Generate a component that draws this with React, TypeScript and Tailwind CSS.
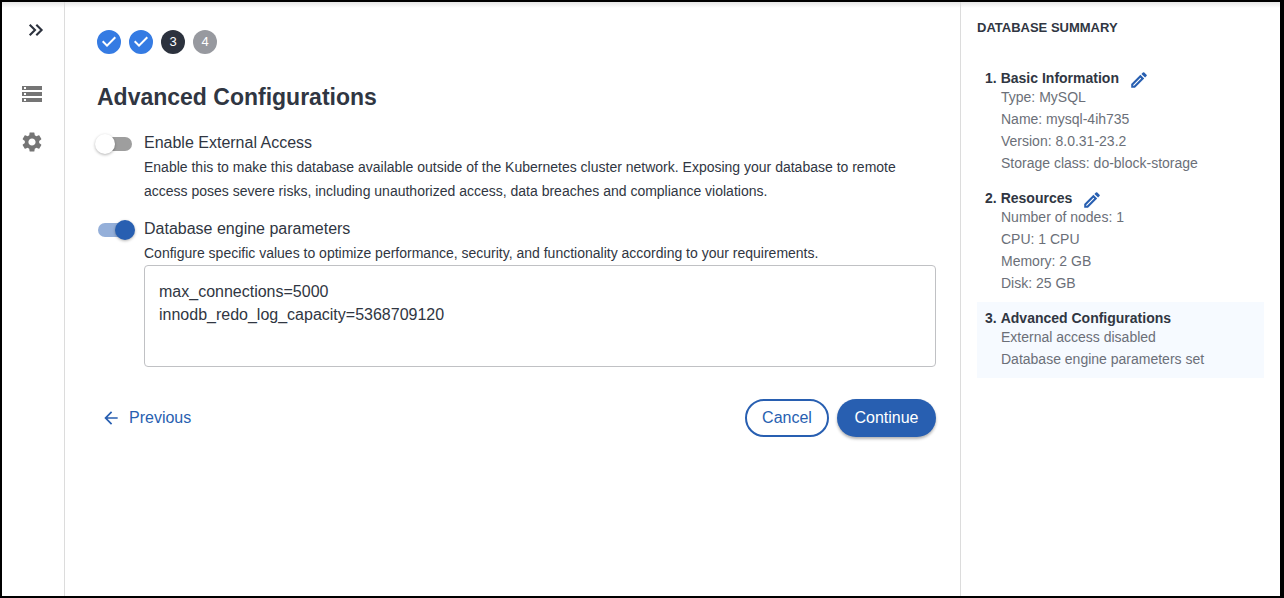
import { useState } from "react";
import type { ReactNode } from "react";
import { MdArrowBack, MdSettings, MdStorage } from "react-icons/md";

function DoneStep({ label }: { label: string }) {
  return (
    <li aria-label={label}>
      <svg viewBox="0 0 24 24" className="block size-6 text-[#357be3]" fill="currentColor">
        <circle cx="12" cy="12" r="10" fill="#fff" />
        <path d="M12 0a12 12 0 1 0 0 24 12 12 0 0 0 0-24zm-2 17l-5-5 1.4-1.4 3.6 3.6 7.6-7.6L19 8l-9 9z" />
      </svg>
    </li>
  );
}

function DoubleChevron() {
  return (
    <svg viewBox="0 0 24 24" className="block size-6" fill="none" stroke="currentColor" strokeWidth="2.1">
      <path d="M5.7 6.7 11 12l-5.3 5.3M12.3 6.7 17.6 12l-5.3 5.3" />
    </svg>
  );
}

function Pencil() {
  return (
    <svg viewBox="0 0 16 16" className="block size-4" fill="currentColor">
      <path
        fillRule="evenodd"
        d="M0.2 12 9.4 2.8l3.8 3.8L4 15.8H0.2zM2.2 13v0.8h0.8l7.2-7.2-0.8-0.8z"
      />
      <path d="M10.4 1.9 11.9 0.5a1 1 0 0 1 1.4 0l2.2 2.2a1 1 0 0 1 0 1.4l-1.4 1.5z" />
    </svg>
  );
}

function Setting({
  id,
  title,
  description,
  checked,
  onChange,
  children,
}: {
  id: string;
  title: string;
  description: string;
  checked: boolean;
  onChange: (value: boolean) => void;
  children?: ReactNode;
}) {
  return (
    <div className="flex items-start gap-[11px]">
      <div className="flex h-6 w-9 shrink-0 items-center justify-center pt-0.5">
        <input
          id={id}
          type="checkbox"
          role="switch"
          checked={checked}
          onChange={(e) => onChange(e.target.checked)}
          className="relative h-3.5 w-[34px] cursor-pointer appearance-none rounded-full bg-[#9e9e9e] before:absolute before:-top-[3px] before:-left-[3px] before:size-5 before:rounded-full before:bg-white before:shadow-[0_1px_3px_rgba(0,0,0,0.3)] checked:bg-[#94afd9] checked:before:left-[17px] checked:before:bg-[#285fb1]"
        />
      </div>
      <div className="min-w-0 flex-1">
        <label htmlFor={id} className="block text-base leading-6">
          {title}
        </label>
        <p className="pr-8 text-sm leading-6">{description}</p>
        {children}
      </div>
    </div>
  );
}

function SummaryItem({
  title,
  number,
  lines,
  editable = false,
  active = false,
}: {
  title: string;
  number: number;
  lines: string[];
  editable?: boolean;
  active?: boolean;
}) {
  return (
    <li className={active ? "bg-[#f6faff] p-2" : "p-2"}>
      <div className="flex h-4 items-center">
        <h3 className="flex gap-1 text-sm leading-4 font-bold">
          <span>{number}.</span>
          <span>{title}</span>
        </h3>
        {editable && (
          <button type="button" aria-label={`Edit ${title}`} className="ml-3 pt-1 text-[#285fb1]">
            <Pencil />
          </button>
        )}
      </div>
      <div className="pl-4 text-sm leading-[22px] text-[#6b6f78]">
        {lines.map((line) => (
          <p key={line}>{line}</p>
        ))}
      </div>
    </li>
  );
}

export default function App() {
  const [external, setExternal] = useState(false);
  const [engine, setEngine] = useState(true);
  const [params, setParams] = useState("max_connections=5000\ninnodb_redo_log_capacity=5368709120");

  return (
    <div className="flex min-h-screen border-2 border-r-4 border-black bg-white font-['Liberation_Sans',Arial,sans-serif] text-[#303642]">
      <div className="flex min-w-0 flex-1 bg-linear-to-b from-[#e6e6e6] to-white to-[6px]">
        <nav aria-label="Main" className="flex w-[63px] shrink-0 flex-col items-start border-r border-[#dcdcdc] pt-4 pl-5 text-[#757575]">
          <button type="button" aria-label="Expand menu" className="mb-10 ml-0.5 text-[#2c323e]">
            <DoubleChevron />
          </button>
          <a href="#databases" aria-label="Databases" className="mb-6 -ml-0.5">
            <MdStorage className="size-6" />
          </a>
          <a href="#settings" aria-label="Settings" className="-ml-0.5">
            <MdSettings className="size-6" />
          </a>
        </nav>

        <main className="min-w-0 flex-1 pt-7 pr-6 pb-8 pl-8">
          <ol className="flex gap-2">
            <DoneStep label="Step 1, done" />
            <DoneStep label="Step 2, done" />
            <li aria-current="step" className="flex size-6 items-center justify-center rounded-full bg-[#2c323e] text-[13px] leading-6 text-white">
              3
            </li>
            <li className="flex size-6 items-center justify-center rounded-full bg-[#97999f] text-[13px] leading-6 text-white">
              4
            </li>
          </ol>

          <h1 className="mt-[27px] text-[23px] leading-8 font-bold">Advanced Configurations</h1>

          <form className="mt-[18px]" onSubmit={(e) => e.preventDefault()}>
            <div className="flex flex-col gap-3.5">
              <Setting
                id="external-access"
                title="Enable External Access"
                description="Enable this to make this database available outside of the Kubernetes cluster network. Exposing your database to remote access poses severe risks, including unauthorized access, data breaches and compliance violations."
                checked={external}
                onChange={setExternal}
              />
              <Setting
                id="engine-parameters"
                title="Database engine parameters"
                description="Configure specific values to optimize performance, security, and functionality according to your requirements."
                checked={engine}
                onChange={setEngine}
              >
                <textarea
                  aria-label="Database engine parameters"
                  rows={3}
                  spellCheck={false}
                  value={params}
                  onChange={(e) => setParams(e.target.value)}
                  className="block w-full resize-none rounded border border-[#c0c1c4] bg-white px-3.5 pt-3.5 pb-[17px] text-base leading-[23px] outline-none"
                />
              </Setting>
            </div>

            <div className="mt-8 flex items-center gap-2 text-base text-[#285fb1]">
              <button type="button" className="mr-auto flex items-center gap-2 py-1.5 pl-1">
                <MdArrowBack className="size-5" />
                Previous
              </button>
              <button type="button" className="min-w-21 rounded-full border-2 border-[#285fb1] px-3 py-1.5 leading-[22px]">
                Cancel
              </button>
              <button type="submit" className="min-w-[99px] rounded-full bg-[#285fb1] px-3 py-2 leading-[22px] text-white shadow-[0_2px_3px_rgba(0,0,0,0.3)]">
                Continue
              </button>
            </div>
          </form>
        </main>

        <aside className="w-80 shrink-0 border-l border-[#dcdcdc] p-4">
          <h2 className="mb-6 text-[13px] leading-5 font-bold uppercase">Database Summary</h2>
          <ol>
            <SummaryItem
              number={1}
              title="Basic Information"
              editable
              lines={["Type: MySQL", "Name: mysql-4ih735", "Version: 8.0.31-23.2", "Storage class: do-block-storage"]}
            />
            <SummaryItem
              number={2}
              title="Resources"
              editable
              lines={["Number of nodes: 1", "CPU: 1 CPU", "Memory: 2 GB", "Disk: 25 GB"]}
            />
            <SummaryItem
              number={3}
              title="Advanced Configurations"
              active
              lines={["External access disabled", "Database engine parameters set"]}
            />
          </ol>
        </aside>
      </div>
    </div>
  );
}
